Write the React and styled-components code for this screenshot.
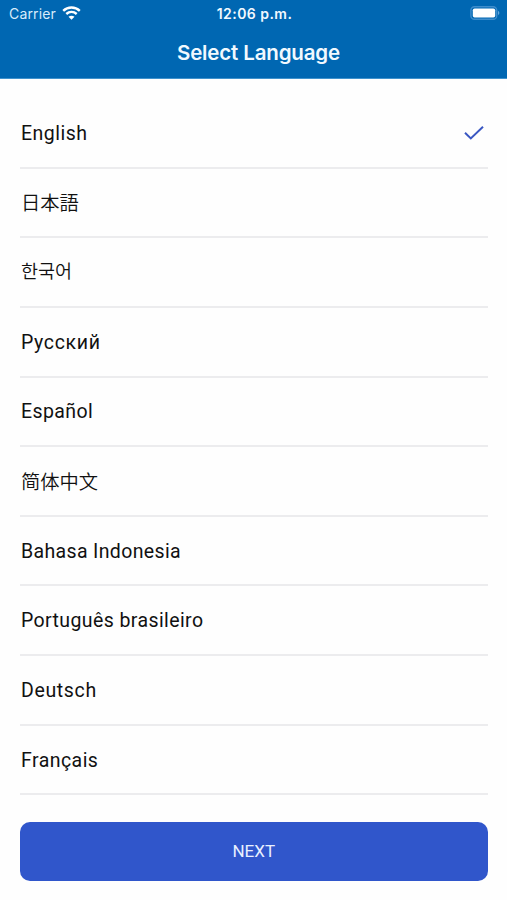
import React from "react";
import styled, { createGlobalStyle } from "styled-components";

const GlobalStyle = createGlobalStyle`
  * { box-sizing: border-box; }
  body { margin: 0; background: #fff; }
`;

const Screen = styled.main`
  width: 507px;
  height: 900px;
  overflow: hidden;
  display: flex;
  flex-direction: column;
  background: #fefefe;
  font-family: Roboto, "Noto Sans CJK JP", sans-serif;
`;

const Header = styled.header`
  height: 79px;
  flex: none;
  background: #0067b2;
  border-bottom: 1px solid #3f92cd;
  color: #f1f9ff;
  font-family: Inter, sans-serif;
`;

const StatusBar = styled.div`
  height: 27px;
  padding: 0 7px 0 9px;
  display: grid;
  grid-template-columns: 1fr auto 1fr;
  align-items: center;
`;

const Carrier = styled.div`
  display: flex;
  align-items: center;
  gap: 6px;
  font-size: 14px;
  line-height: 27px;
  letter-spacing: 0.15px;
  color: #d8ecfb;
`;

const Clock = styled.time`
  font-size: 14px;
  line-height: 27px;
  font-weight: 600;
  letter-spacing: 0.45px;
`;

const Battery = styled.svg`
  justify-self: end;
  margin-bottom: 1px;
`;

const Title = styled.h1`
  margin: 0;
  padding-left: 10px;
  text-align: center;
  font-size: 20.5px;
  line-height: 52px;
  font-weight: 580;
  letter-spacing: -0.15px;
`;

const LanguageList = styled.ul`
  list-style: none;
  margin: 20px 19.5px 0 20px;
  padding: 0;
`;

const LanguageRow = styled.li`
  height: 69.65px;
  padding: 2px 4px 0 1px;
  display: flex;
  align-items: center;
  justify-content: space-between;
  border-bottom: 2px solid #ececee;
`;

const LanguageName = styled.span`
  font-family: Roboto, "Noto Sans CJK ${(p) => p.$script || "JP"}", sans-serif;
  font-size: ${(p) => p.$size || 19.5}px;
  font-weight: ${(p) => (p.$script ? 350 : 400)};
  line-height: 28px;
  padding-top: ${(p) => (p.$script && p.$script !== "KR" ? 2 : 0)}px;
  padding-bottom: ${(p) => (p.$script === "KR" ? 2 : 0)}px;
  letter-spacing: ${(p) => p.$tracking || 0}px;
  display: block;
  color: #111;
`;

const NextButton = styled.button`
  flex: none;
  height: 59px;
  margin: 26.6px 19.5px 0 20px;
  padding: 0;
  border: 0;
  border-radius: 10px;
  background: #3056cb;
  color: #e9f0ff;
  font-family: Roboto, sans-serif;
  font-size: 17px;
  line-height: 59px;
  letter-spacing: 0;
`;

const languages = [
  { name: "English", tracking: 0.5 },
  { name: "日本語", script: "JP", size: 19.3 },
  { name: "한국어", script: "KR", size: 18.5 },
  { name: "Русский", tracking: 0.65 },
  { name: "Español", tracking: 0.4 },
  { name: "简体中文", script: "SC", size: 19.3 },
  { name: "Bahasa Indonesia", tracking: 0.35 },
  { name: "Português brasileiro", tracking: 0.4 },
  { name: "Deutsch", tracking: 0.65 },
  { name: "Français", tracking: 0.45 },
];

const WifiIcon = () => (
  <svg width="19" height="15" viewBox="0 0 19 15" fill="none" stroke="#fff" strokeWidth="2.4">
    <path d="M1.2 4.8C5.9.4 13.1.4 17.8 4.8" />
    <path d="M4.3 8c3-2.8 7.4-2.8 10.4 0" />
    <path d="M6.5 10.8c1.7-1.5 4.3-1.5 6 0l-3 3z" fill="#fff" stroke="none" />
  </svg>
);

const BatteryIcon = () => (
  <Battery width="30" height="14" viewBox="0 0 30 14" fill="none">
    <rect x="0.9" y="0.7" width="25.8" height="12.6" rx="3.6" stroke="#3e8dcc" strokeWidth="1.4" />
    <rect x="2.8" y="2.4" width="22.4" height="9.2" rx="1.8" fill="#fff" />
    <path d="M28 4.8q2.8 2.2 0 4.4z" fill="#65a8dc" />
  </Battery>
);

const CheckIcon = () => (
  <svg width="20" height="16" viewBox="0 0 20 16" fill="none" stroke="#3a57c2" strokeWidth="2">
    <path d="M1 6.8 6.8 12.4 19 0.8" />
  </svg>
);

export default function App() {
  return (
    <Screen>
      <GlobalStyle />
      <Header>
        <StatusBar>
          <Carrier>Carrier <WifiIcon /></Carrier>
          <Clock>12:06 p.m.</Clock>
          <BatteryIcon />
        </StatusBar>
        <Title>Select Language</Title>
      </Header>
      <LanguageList>
        {languages.map((l, i) => (
          <LanguageRow key={l.name}>
            <LanguageName $script={l.script} $size={l.size} $tracking={l.tracking}>
              {l.name}
            </LanguageName>
            {i === 0 && <CheckIcon />}
          </LanguageRow>
        ))}
      </LanguageList>
      <NextButton>NEXT</NextButton>
    </Screen>
  );
}
